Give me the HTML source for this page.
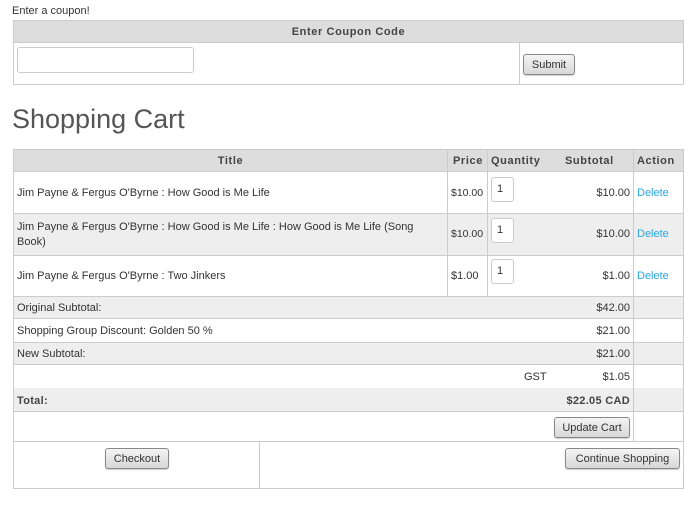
<!DOCTYPE html>
<html><head><meta charset="utf-8"><style>
*{margin:0;padding:0;box-sizing:border-box}
body{width:696px;height:505px;background:#fff;font-family:"Liberation Sans",sans-serif;font-size:11px;color:#333;position:relative;overflow:hidden}
.a{position:absolute}
.t{position:absolute;white-space:nowrap;line-height:13px}
.b{position:absolute;border:1px solid #ccc}
.h{font-weight:bold;letter-spacing:0.6px;color:#444}
.btn{position:absolute;border:1px solid #888;border-radius:3px;background:linear-gradient(#f4f4f4,#d8d8d8);font-size:11px;text-align:center;line-height:20px;color:#333;box-shadow:0 1px 1px rgba(0,0,0,.2)}
.inp{position:absolute;border:1px solid #ccc;border-radius:3px;background:#fff}
.lnk{color:#29a8e0}
</style></head><body>
<div class="t" style="left:12px;top:5px">Enter a coupon!</div>
<div class="b" style="left:13px;top:20px;width:671px;height:65px"></div>
<div class="a" style="left:14px;top:21px;width:669px;height:22px;background:#ddd;border-bottom:1px solid #ccc"></div>
<div class="t h" style="left:14px;top:26px;width:669px;text-align:center">Enter Coupon Code</div>
<div class="a" style="left:519px;top:43px;width:1px;height:41px;background:#ccc"></div>
<div class="inp" style="left:17px;top:47px;width:177px;height:26px"></div>
<div class="btn" style="left:523px;top:54px;width:52px;height:21px">Submit</div>
<div class="t" style="left:12px;top:102px;font-size:27px;line-height:34px;color:#555">Shopping Cart</div>
<div class="b" style="left:13px;top:149px;width:671px;height:293px"></div>
<div class="a" style="left:14px;top:150px;width:669px;height:22px;background:#ddd;border-bottom:1px solid #ccc"></div>
<div class="a" style="left:14px;top:213px;width:669px;height:42px;background:#eee;border-top:1px solid #ccc"></div>
<div class="a" style="left:14px;top:255px;width:669px;height:1px;background:#ccc"></div>
<div class="a" style="left:14px;top:296px;width:669px;height:23px;background:#eee;border-top:1px solid #ccc;border-bottom:1px solid #ccc"></div>
<div class="a" style="left:14px;top:342px;width:669px;height:23px;background:#eee;border-top:1px solid #ccc;border-bottom:1px solid #ccc"></div>
<div class="a" style="left:14px;top:388px;width:669px;height:24px;background:#eee;border-bottom:1px solid #ccc"></div>
<div class="a" style="left:447px;top:150px;width:1px;height:146px;background:#ccc"></div>
<div class="a" style="left:487px;top:150px;width:1px;height:146px;background:#ccc"></div>
<div class="a" style="left:633px;top:150px;width:1px;height:291px;background:#ccc"></div>
<div class="t h" style="left:14px;top:155px;width:433px;text-align:center">Title</div>
<div class="t h" style="left:453px;top:155px">Price</div>
<div class="t h" style="left:491px;top:155px">Quantity</div>
<div class="t h" style="left:565px;top:155px">Subtotal</div>
<div class="t h" style="left:637px;top:155px">Action</div>
<div class="t" style="left:17px;top:187px">Jim Payne &amp; Fergus O'Byrne : How Good is Me Life</div>
<div class="t" style="left:17px;top:220px;line-height:15px">Jim Payne &amp; Fergus O'Byrne : How Good is Me Life : How Good is Me Life (Song<br>Book)</div>
<div class="t" style="left:17px;top:270px">Jim Payne &amp; Fergus O'Byrne : Two Jinkers</div>
<div class="t" style="left:451px;top:187px;font-size:10.5px">$10.00</div>
<div class="t" style="left:451px;top:228px;font-size:10.5px">$10.00</div>
<div class="t" style="left:451px;top:270px">$1.00</div>
<div class="inp" style="left:491px;top:177px;width:23px;height:25px"></div>
<div class="inp" style="left:491px;top:218px;width:23px;height:25px"></div>
<div class="inp" style="left:491px;top:259px;width:23px;height:25px"></div>
<div class="t" style="left:497px;top:183px">1</div>
<div class="t" style="left:497px;top:224px">1</div>
<div class="t" style="left:497px;top:265px">1</div>
<div class="t" style="left:540px;top:187px;width:90px;text-align:right">$10.00</div>
<div class="t" style="left:540px;top:228px;width:90px;text-align:right">$10.00</div>
<div class="t" style="left:540px;top:270px;width:90px;text-align:right">$1.00</div>
<div class="t lnk" style="left:637px;top:187px">Delete</div>
<div class="t lnk" style="left:637px;top:228px">Delete</div>
<div class="t lnk" style="left:637px;top:270px">Delete</div>
<div class="t" style="left:17px;top:302px">Original Subtotal:</div>
<div class="t" style="left:17px;top:325px">Shopping Group Discount: Golden 50 %</div>
<div class="t" style="left:17px;top:348px">New Subtotal:</div>
<div class="t" style="left:524px;top:371px">GST</div>
<div class="t h" style="left:17px;top:395px;letter-spacing:0.3px">Total:</div>
<div class="t" style="left:540px;top:302px;width:90px;text-align:right">$42.00</div>
<div class="t" style="left:540px;top:325px;width:90px;text-align:right">$21.00</div>
<div class="t" style="left:540px;top:348px;width:90px;text-align:right">$21.00</div>
<div class="t" style="left:540px;top:371px;width:90px;text-align:right">$1.05</div>
<div class="t h" style="left:500px;top:395px;width:130px;text-align:right;letter-spacing:0.3px">$22.05 CAD</div>
<div class="btn" style="left:554px;top:417px;width:76px;height:21px">Update Cart</div>
<div class="b" style="left:13px;top:441px;width:671px;height:48px;border-top:none"></div>
<div class="a" style="left:259px;top:441px;width:1px;height:47px;background:#ccc"></div>
<div class="btn" style="left:105px;top:448px;width:64px;height:21px">Checkout</div>
<div class="btn" style="left:565px;top:448px;width:115px;height:21px">Continue Shopping</div>
</body></html>
